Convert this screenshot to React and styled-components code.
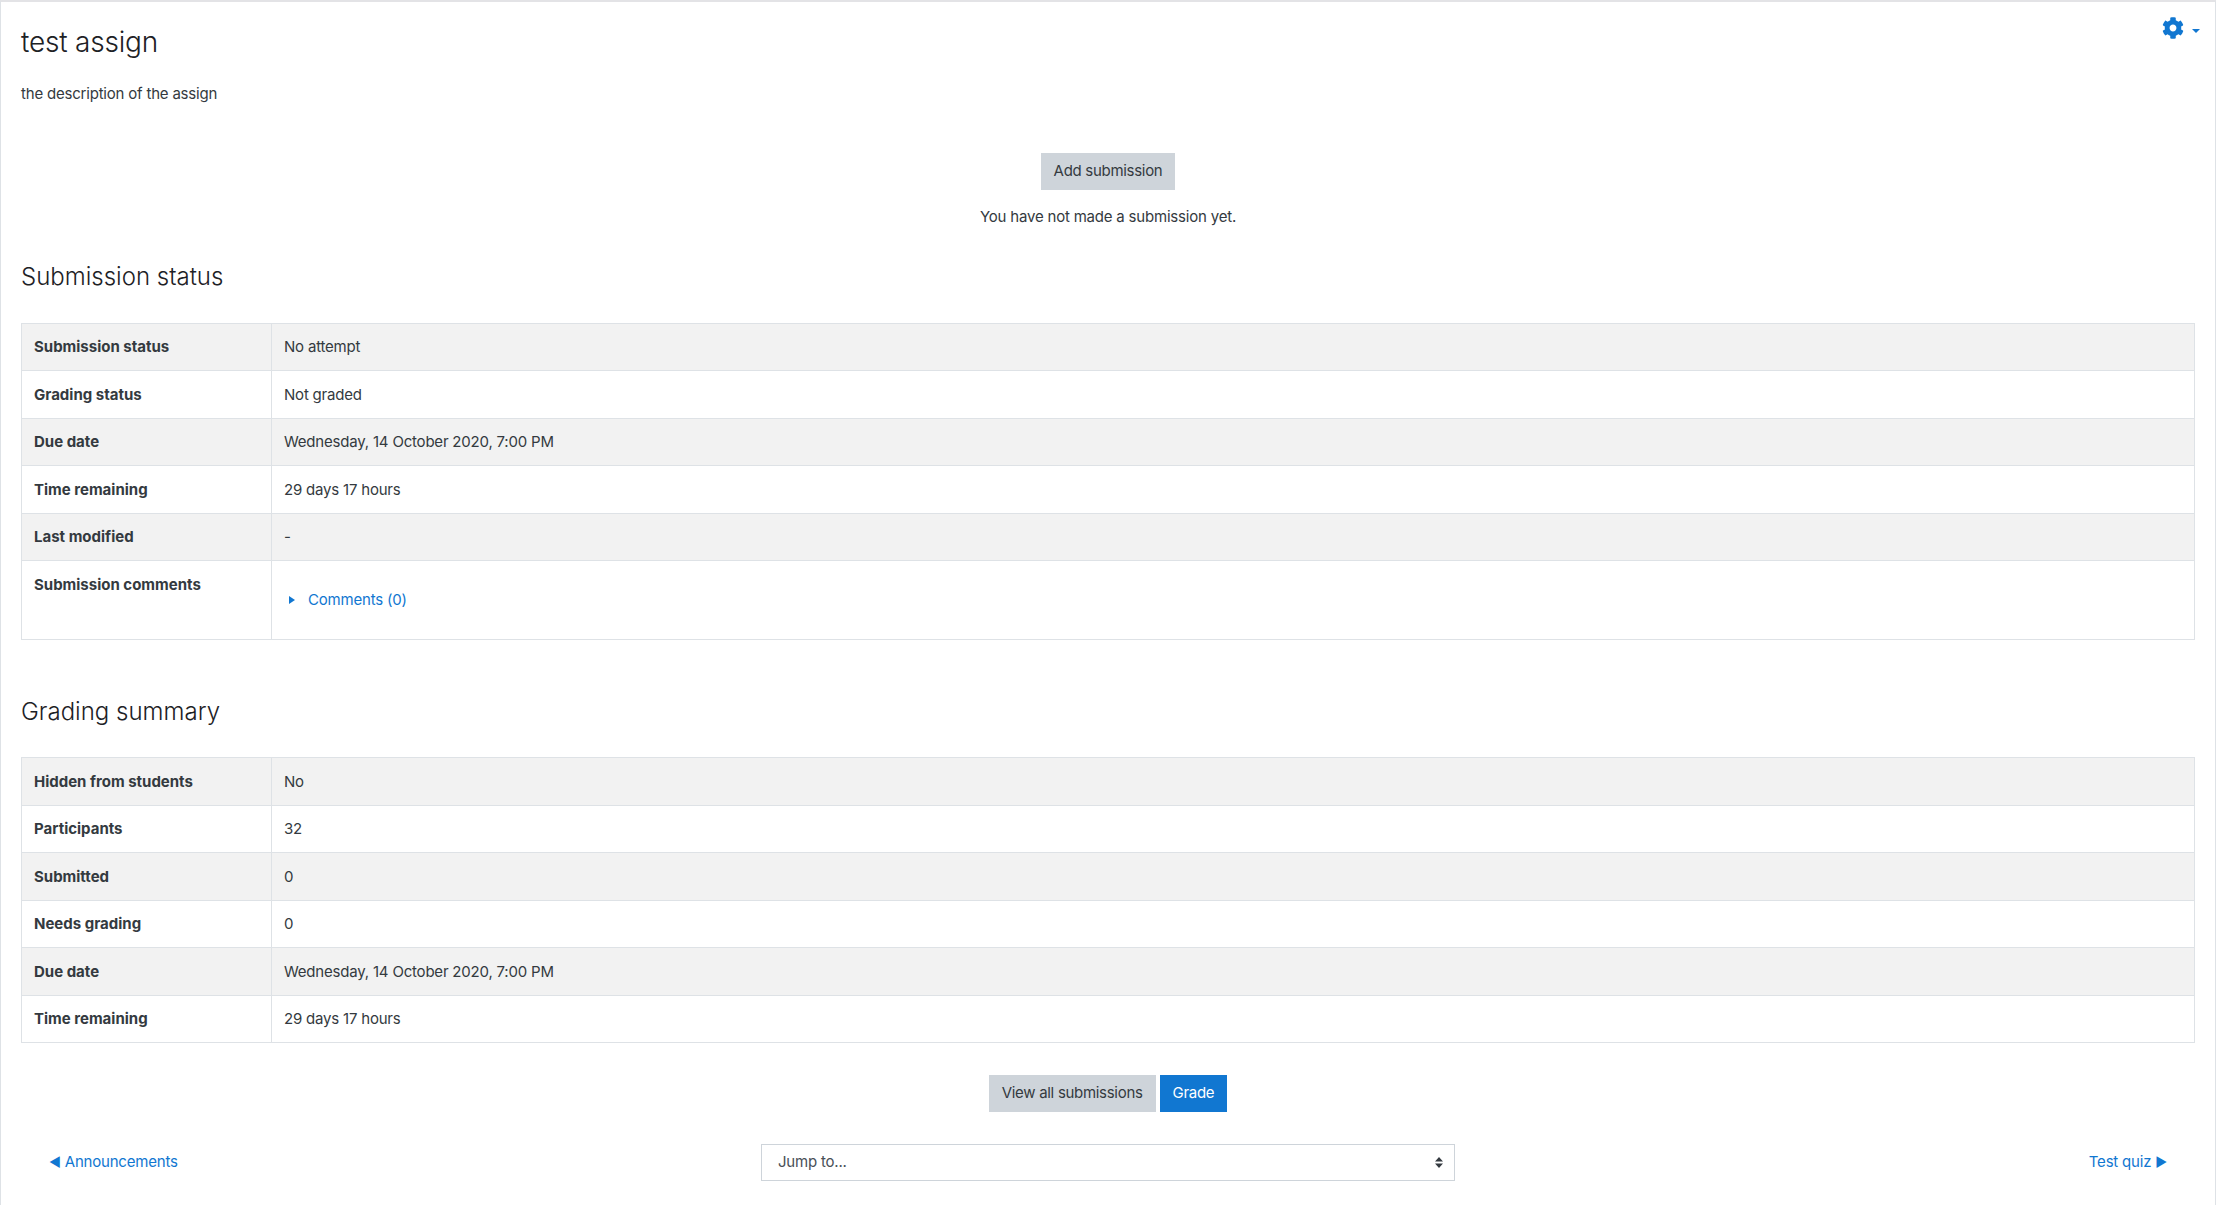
import React from 'react'
import styled, { createGlobalStyle } from 'styled-components'
import { FaCog } from 'react-icons/fa'

const GlobalStyle = createGlobalStyle`
    html, body {
        margin: 0;
        padding: 0;
        background: #fff;
    }
    body {
        font-family: Inter, "Liberation Sans", sans-serif;
        font-size: 15px;
        line-height: 22.5px;
        letter-spacing: -0.2px;
        color: #343a40;
    }
    * {
        box-sizing: border-box;
    }
`

const Page = styled.div`
    position: relative;
    height: 1205px;
    overflow: hidden;
    padding: 18px 20px 0;
    border-top: 2px solid #e3e3e6;
    border-left: 1px solid #dee2e6;
    border-right: 1px solid #dee2e6;
`

const ActionMenu = styled.a`
    position: absolute;
    top: 15px;
    right: 15px;
    display: flex;
    align-items: center;
    gap: 8px;
    color: #1177d1;
    font-size: 22px;
    line-height: 0;
`

const Caret = styled.span`
    display: block;
    margin-top: 5px;
    border-left: 4px solid transparent;
    border-right: 4px solid transparent;
    border-top: 4px solid #1177d1;
`

const Title = styled.h2`
    margin: 0;
    font-size: 28px;
    line-height: 44px;
    font-weight: 300;
    letter-spacing: -0.2px;
    color: #1d2125;
`

const Description = styled.p`
    margin: 19px 0 0;
`

const Center = styled.div`
    display: flex;
    flex-direction: column;
    align-items: center;
`

const SubmitBox = styled(Center)`
    margin-top: 47px;
    gap: 16px;
`

const Button = styled.button`
    height: 37px;
    padding: 0 13px;
    border: none;
    border-radius: 0;
    font-family: inherit;
    font-size: 15px;
    line-height: 22.5px;
    letter-spacing: -0.3px;
    color: ${p => (p.$primary ? '#fff' : '#343a40')};
    background-color: ${p => (p.$primary ? '#1177d1' : '#ced4da')};
    cursor: pointer;
`

const Heading = styled.h3`
    margin: ${p => p.$top} 0 0;
    font-size: 24px;
    line-height: 36px;
    font-weight: 300;
    letter-spacing: 0;
    color: #1d2125;
`

const Table = styled.table`
    width: 100%;
    margin-top: 27.5px;
    border-collapse: collapse;
    table-layout: fixed;
`

const Row = styled.tr`
    background-color: ${p => (p.$shaded ? '#f2f2f2' : '#fff')};
`

const Label = styled.th`
    width: 250px;
    padding: 12.5px 12px 11.5px;
    border: 1px solid #dee2e6;
    font-weight: 700;
    letter-spacing: 0;
    text-align: left;
    vertical-align: top;
    color: #343a40;
`

const Value = styled.td`
    padding: 12.5px 12px 11.5px;
    border: 1px solid #dee2e6;
    vertical-align: top;
`

const Link = styled.a`
    color: #1177d1;
    text-decoration: none;
    cursor: pointer;
`

const Comments = styled(Link)`
    display: flex;
    align-items: center;
    gap: 13px;
    padding: 15px 0 16px 5px;
`

const CommentsArrow = styled.span`
    display: block;
    border-top: 4.5px solid transparent;
    border-bottom: 4.5px solid transparent;
    border-left: 6px solid #1177d1;
`

const ButtonRow = styled.div`
    display: flex;
    justify-content: center;
    gap: 4px;
    margin-top: 31.5px;
`

const Footer = styled.div`
    display: grid;
    grid-template-columns: 1fr 694px 1fr;
    align-items: center;
    margin-top: 32px;
    padding: 0 28px;
`

const NextLink = styled(Link)`
    justify-self: end;
`

const PrevLink = styled(Link)`
    justify-self: start;
`

const LinkArrow = styled.span`
    font-size: 13px;
`

const JumpSelect = styled.div`
    display: flex;
    align-items: center;
    justify-content: space-between;
    height: 37px;
    padding: 0 11px 0 16px;
    border: 1px solid #ced4da;
    color: #495057;
`

const StepIcon = () => (
  <svg width="8" height="11" viewBox="0 0 8 11">
    <path d="M4 0 8 4.5H0z M0 6.5H8L4 11z" fill="#343a40" />
  </svg>
)

const submissionRows = [
  ['Submission status', 'No attempt'],
  ['Grading status', 'Not graded'],
  ['Due date', 'Wednesday, 14 October 2020, 7:00 PM'],
  ['Time remaining', '29 days 17 hours'],
  ['Last modified', '-'],
]

const gradingRows = [
  ['Hidden from students', 'No'],
  ['Participants', '32'],
  ['Submitted', '0'],
  ['Needs grading', '0'],
  ['Due date', 'Wednesday, 14 October 2020, 7:00 PM'],
  ['Time remaining', '29 days 17 hours'],
]

export default function App() {
  return (
    <>
      <GlobalStyle />
      <Page>
        <ActionMenu>
          <FaCog />
          <Caret />
        </ActionMenu>

        <Title>test assign</Title>
        <Description>the description of the assign</Description>

        <SubmitBox>
          <Button>Add submission</Button>
          <span>You have not made a submission yet.</span>
        </SubmitBox>

        <Heading $top="31px">Submission status</Heading>
        <Table>
          <tbody>
            {submissionRows.map(([label, value], i) => (
              <Row key={label} $shaded={i % 2 === 0}>
                <Label>{label}</Label>
                <Value>{value}</Value>
              </Row>
            ))}
            <Row>
              <Label>Submission comments</Label>
              <Value>
                <Comments>
                  <CommentsArrow />
                  Comments (0)
                </Comments>
              </Value>
            </Row>
          </tbody>
        </Table>

        <Heading $top="54px">Grading summary</Heading>
        <Table>
          <tbody>
            {gradingRows.map(([label, value], i) => (
              <Row key={label} $shaded={i % 2 === 0}>
                <Label>{label}</Label>
                <Value>{value}</Value>
              </Row>
            ))}
          </tbody>
        </Table>

        <ButtonRow>
          <Button>View all submissions</Button>
          <Button $primary>Grade</Button>
        </ButtonRow>

        <Footer>
          <PrevLink><LinkArrow>◄</LinkArrow> Announcements</PrevLink>
          <JumpSelect>
            Jump to...
            <StepIcon />
          </JumpSelect>
          <NextLink>Test quiz <LinkArrow>►</LinkArrow></NextLink>
        </Footer>
      </Page>
    </>
  )
}
